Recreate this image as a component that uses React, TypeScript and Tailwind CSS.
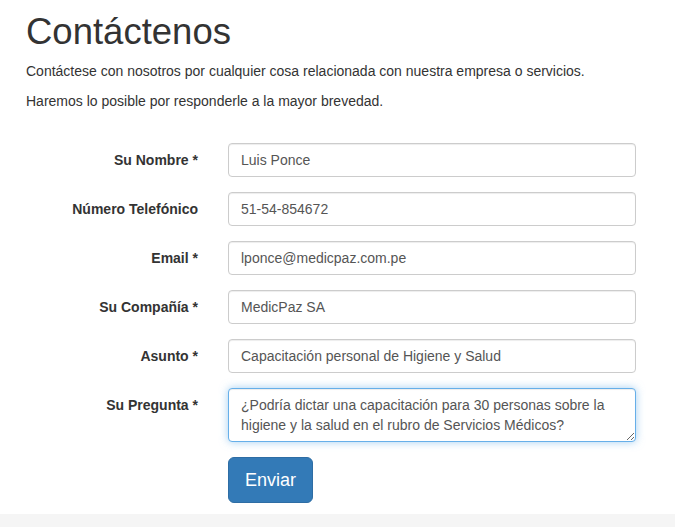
import React from 'react'

const fields = [
  { label: 'Su Nombre *', value: 'Luis Ponce' },
  { label: 'Número Telefónico', value: '51-54-854672' },
  { label: 'Email *', value: 'lponce@medicpaz.com.pe' },
  { label: 'Su Compañía *', value: 'MedicPaz SA' },
  { label: 'Asunto *', value: 'Capacitación personal de Higiene y Salud' },
]

const App = () => {
  return (
    <div className="min-h-screen flex flex-col bg-white font-['Liberation_Sans',Arial,sans-serif] text-[#333] text-[14px] leading-[20px]">
      <main className="flex-1 pl-[26px]">
        <h1 className="text-[36.5px] leading-[1.1] font-normal mt-[12px] mb-[9px]">Contáctenos</h1>
        <p className="mb-[10px]">Contáctese con nosotros por cualquier cosa relacionada con nuestra empresa o servicios.</p>
        <p className="mb-[10px]">Haremos lo posible por responderle a la mayor brevedad.</p>

        <form className="mt-[32px]" onSubmit={(e) => e.preventDefault()}>
          {fields.map((f) => (
            <div key={f.label} className="flex mb-[15px]">
              <label className="w-[172px] text-right font-bold pt-[7px]">{f.label}</label>
              <input
                type="text"
                readOnly
                value={f.value}
                className="ml-[30px] w-[408px] h-[34px] px-[12px] py-[6px] text-[#555] bg-white border border-[#ccc] rounded-[4px] shadow-[inset_0_1px_1px_rgba(0,0,0,0.075)] outline-none"
              />
            </div>
          ))}

          <div className="flex mb-[15px]">
            <label className="w-[172px] text-right font-bold pt-[7px]">Su Pregunta *</label>
            <textarea
              readOnly
              rows={2}
              value="¿Podría dictar una capacitación para 30 personas sobre la higiene y la salud en el rubro de Servicios Médicos?"
              className="ml-[30px] w-[408px] h-[54px] px-[12px] py-[6px] text-[#555] bg-white border border-[#66afe9] rounded-[4px] shadow-[inset_0_1px_1px_rgba(0,0,0,0.075),0_0_8px_rgba(102,175,233,0.6)] outline-none leading-[20px]"
            />
          </div>

          <div className="flex mb-[11px]">
            <div className="w-[172px]" />
            <button
              type="submit"
              className="ml-[30px] bg-[#337ab7] border border-[#2e6da4] text-white text-[18px] leading-[24px] px-[16px] py-[10px] rounded-[6px]"
            >
              Enviar
            </button>
          </div>
        </form>
      </main>
      <div className="h-[13px] bg-[#f5f5f5]" />
    </div>
  )
}

export default App
